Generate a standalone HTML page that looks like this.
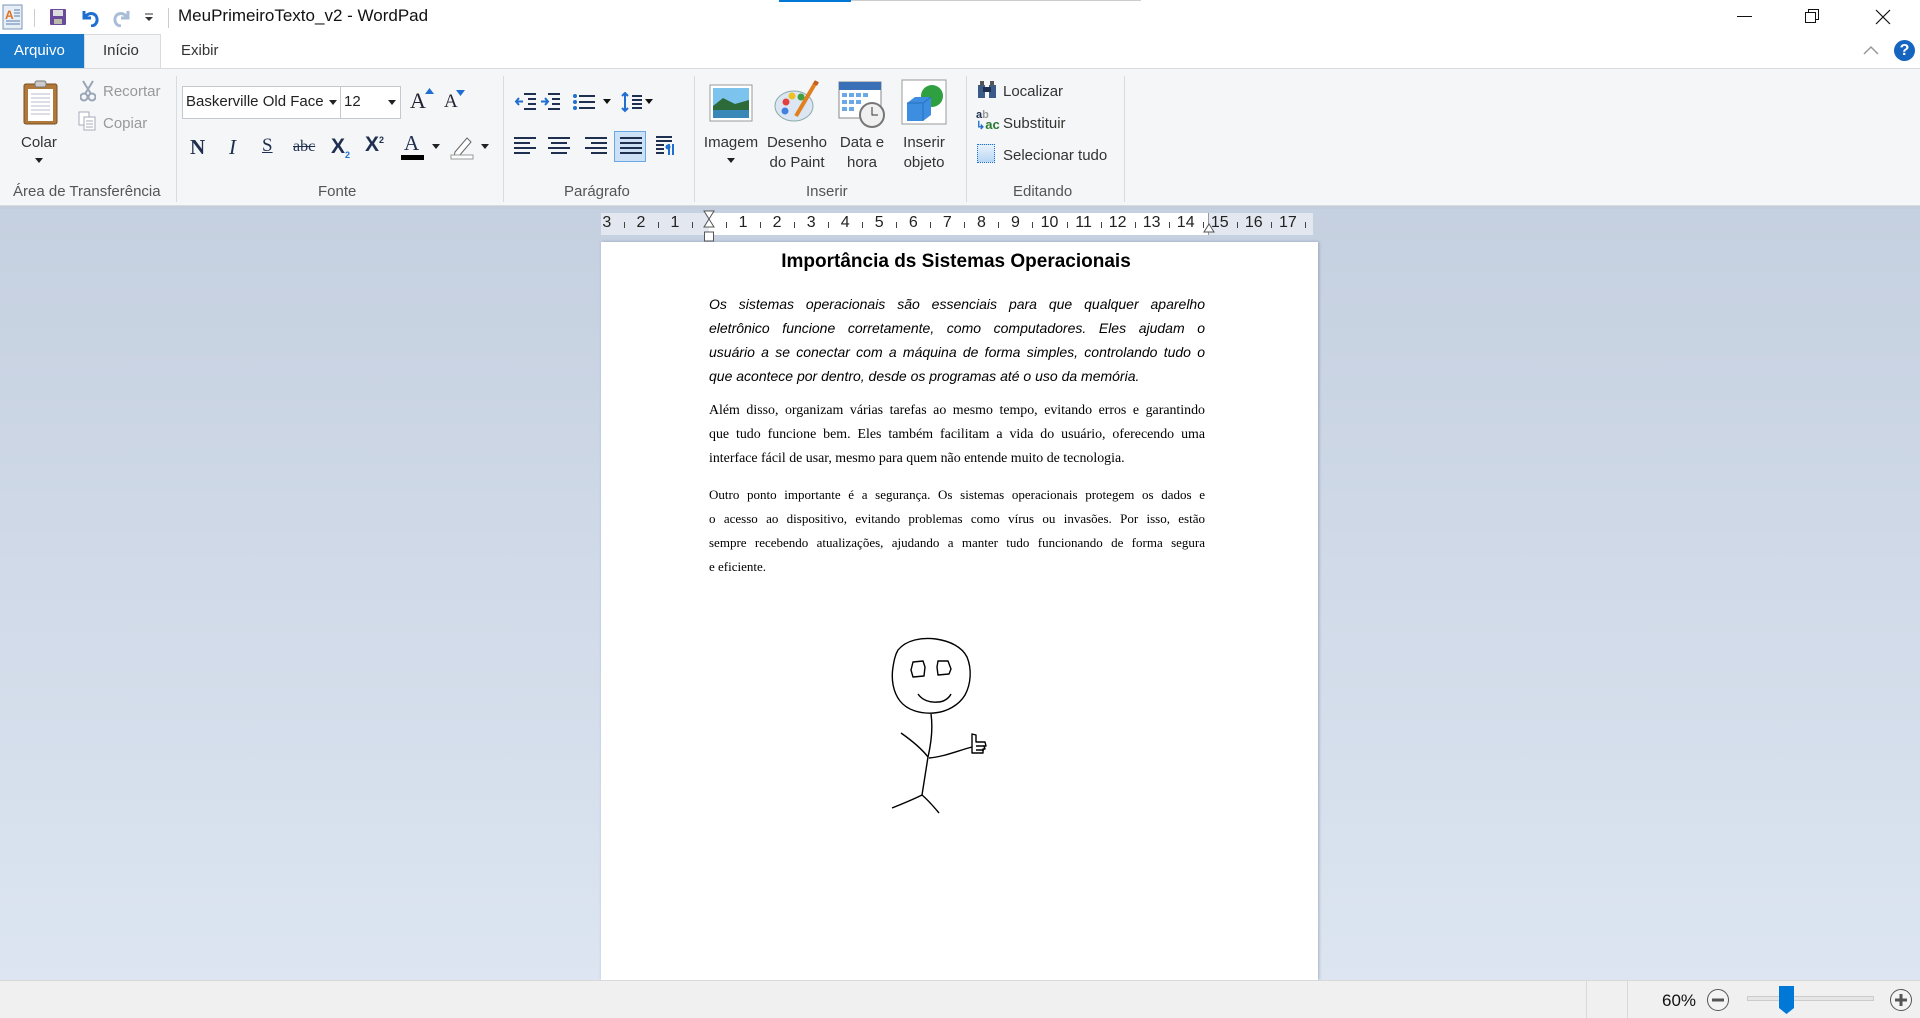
<!DOCTYPE html>
<html><head><meta charset="utf-8">
<style>
*{margin:0;padding:0;box-sizing:border-box}
body{width:1920px;height:1018px;overflow:hidden;font-family:"Liberation Sans",sans-serif;background:#fff;position:relative;color:#222}
.a{position:absolute;white-space:nowrap}
.rb{font-size:15px;color:#333}
.gl{font-size:15px;color:#555;top:183px}
.sep{position:absolute;top:76px;width:1px;height:126px;background:#dadbdc}
.ctr{transform:translateX(-50%);text-align:center}
.tick{position:absolute;top:222px;width:1px;height:6px;background:#444}
.num{position:absolute;top:214px;font-size:16px;color:#222;transform:translateX(-50%)}
.t{position:absolute;left:709px;width:496px;color:#000}
.t div{text-align:justify;text-align-last:justify;white-space:nowrap;height:24px}
.t div.l{text-align-last:left}
</style></head><body>
<!-- title bar -->
<svg class="a" style="left:2px;top:4px" width="22" height="26" viewBox="0 0 22 26"><rect x="1" y="1" width="19" height="24" fill="#e8eef6" stroke="#7a94b8"/><text x="3" y="15" font-size="12" font-family="Liberation Sans" fill="#e07020" font-weight="bold">A</text><path d="M12 6h6M12 9h6M12 12h6M4 17h14M4 20h14" stroke="#5a7fb0"/></svg>
<div class="a" style="left:34px;top:9px;width:1px;height:18px;background:#ccc"></div>
<svg class="a" style="left:50px;top:9px" width="16" height="16"><rect x="0" y="0" width="16" height="16" rx="1" fill="#6a4a9a"/><rect x="3" y="1" width="10" height="6" fill="#ddd"/><rect x="4" y="10" width="8" height="5" fill="#bba"/></svg>
<svg class="a" style="left:80px;top:7px" width="20" height="20"><path d="M4 4v7h7" fill="none" stroke="#1e6fd0" stroke-width="3"/><path d="M5 10c4-6 13-4 12 4c-1 4-4 5-6 5" fill="none" stroke="#1e6fd0" stroke-width="3"/></svg>
<svg class="a" style="left:112px;top:7px" width="20" height="20"><path d="M16 4v7h-7" fill="none" stroke="#a9bdd6" stroke-width="3"/><path d="M15 10c-4-6-13-4-12 4c1 4 4 5 6 5" fill="none" stroke="#a9bdd6" stroke-width="3"/></svg>
<svg class="a" style="left:144px;top:13px" width="10" height="10"><path d="M1 1h8" stroke="#333"/><path d="M1 4h8l-4 4z" fill="#333"/></svg>
<div class="a" style="left:168px;top:8px;width:1px;height:20px;background:#ccc"></div>
<div class="a" style="left:178px;top:6px;font-size:17px;color:#111">MeuPrimeiroTexto_v2 - WordPad</div>
<div class="a" style="left:779px;top:0;width:72px;height:2px;background:#0078d7"></div>
<div class="a" style="left:851px;top:0;width:290px;height:1px;background:#ccc"></div>
<div class="a" style="left:1737px;top:16px;width:15px;height:1px;background:#111"></div>
<svg class="a" style="left:1805px;top:9px" width="15" height="15"><rect x="0.5" y="3.5" width="10" height="10" fill="#fff" stroke="#111"/><path d="M3.5 3.5v-3h10v10h-3" fill="none" stroke="#111"/></svg>
<svg class="a" style="left:1875px;top:9px" width="16" height="16"><path d="M1 1l14 14M15 1L1 15" stroke="#111" stroke-width="1.2"/></svg>
<!-- tabs -->
<div class="a" style="left:0;top:34px;width:84px;height:34px;background:#1979ca;color:#fff;font-size:15px;padding:8px 0 0 14px">Arquivo</div>
<div class="a" style="left:84px;top:34px;width:77px;height:35px;background:#f5f6f7;border:1px solid #dadbdc;border-bottom:none;font-size:15px;padding:7px 0 0 18px;color:#333">Início</div>
<div class="a rb" style="left:181px;top:42px">Exibir</div>
<div class="a" style="left:0;top:68px;width:1920px;height:1px;background:#dadbdc"></div>
<svg class="a" style="left:1863px;top:45px" width="16" height="10"><path d="M1 9l7-7 7 7" fill="none" stroke="#999" stroke-width="1.5"/></svg>
<div class="a" style="left:1894px;top:40px;width:21px;height:21px;border-radius:50%;background:#1565c0;color:#fff;font-size:16px;font-weight:bold;text-align:center;line-height:21px">?</div>
<!-- ribbon -->
<div class="a" style="left:0;top:69px;width:1920px;height:137px;background:#f5f6f7;border-bottom:1px solid #dadbdc"></div>
<div class="a" style="left:0;top:206px;width:1920px;height:3px;background:#c4cddb"></div>
<!-- clipboard -->
<svg class="a" style="left:22px;top:80px" width="38" height="46"><rect x="2" y="4" width="33" height="40" rx="2" fill="#b0783a" stroke="#7a5020"/><rect x="6" y="9" width="25" height="32" fill="#fff"/><path d="M9 14h19M9 18h19M9 22h19M9 26h19M9 30h19M9 34h19" stroke="#bbc"/><rect x="13" y="1" width="11" height="6" rx="2" fill="#ccc" stroke="#777"/></svg>
<div class="a rb" style="left:21px;top:134px">Colar</div>
<svg class="a" style="left:35px;top:158px" width="8" height="5"><path d="M0 0h8l-4 5z" fill="#222"/></svg>
<svg class="a" style="left:80px;top:80px" width="16" height="22"><path d="M3 1l8 13M13 1l-8 13" stroke="#9aa6b8" stroke-width="2"/><circle cx="4" cy="17" r="3.5" fill="none" stroke="#9aa6b8" stroke-width="2"/><circle cx="12" cy="17" r="3.5" fill="none" stroke="#9aa6b8" stroke-width="2"/></svg>
<div class="a rb" style="left:103px;top:83px;color:#999">Recortar</div>
<svg class="a" style="left:78px;top:111px" width="18" height="20"><rect x="1" y="1" width="10" height="13" fill="#fff" stroke="#aab"/><rect x="6" y="6" width="11" height="13" fill="#fff" stroke="#aab"/><path d="M8 10h7M8 13h7M8 16h7" stroke="#aab"/></svg>
<div class="a rb" style="left:103px;top:115px;color:#999">Copiar</div>
<div class="a gl" style="left:13px">Área de Transferência</div>
<div class="sep" style="left:176px"></div>
<!-- font -->
<div class="a" style="left:182px;top:86px;width:159px;height:33px;background:#fff;border:1px solid #c5c9cf;font-size:15px;padding:6px 0 0 3px;color:#222">Baskerville Old Face</div>
<svg class="a" style="left:329px;top:100px" width="8" height="5"><path d="M0 0h8l-4 5z" fill="#222"/></svg>
<div class="a" style="left:340px;top:86px;width:61px;height:33px;background:#fff;border:1px solid #c5c9cf;font-size:15px;padding:6px 0 0 3px;color:#222">12</div>
<svg class="a" style="left:388px;top:100px" width="8" height="5"><path d="M0 0h8l-4 5z" fill="#222"/></svg>
<div class="a" style="left:410px;top:88px;font:22px 'Liberation Serif',serif;color:#223">A</div>
<svg class="a" style="left:425px;top:88px" width="9" height="6"><path d="M0 6l4.5-6 4.5 6z" fill="#1e6fd0"/></svg>
<div class="a" style="left:444px;top:91px;font:19px 'Liberation Serif',serif;color:#223">A</div>
<svg class="a" style="left:456px;top:90px" width="9" height="6"><path d="M0 0l4.5 6 4.5-6z" fill="#1e6fd0"/></svg>
<div class="a" style="left:190px;top:135px;font:bold 21px 'Liberation Serif',serif;color:#1f2f4f">N</div>
<div class="a" style="left:229px;top:135px;font:italic 21px 'Liberation Serif',serif;color:#1f2f4f">I</div>
<div class="a" style="left:262px;top:135px;font:19px 'Liberation Serif',serif;color:#1f2f4f;text-decoration:underline">S</div>
<div class="a" style="left:293px;top:138px;font:16px 'Liberation Serif',serif;color:#1f2f4f;text-decoration:line-through">abc</div>
<div class="a" style="left:331px;top:135px;font:bold 21px 'Liberation Sans',sans-serif;color:#1f2f4f">X<sub style="font-size:9px;color:#1e6fd0">2</sub></div>
<div class="a" style="left:365px;top:133px;font:bold 21px 'Liberation Sans',sans-serif;color:#1f2f4f">X<sup style="font-size:9px">2</sup></div>
<div class="a" style="left:404px;top:131px;font:21px 'Liberation Serif',serif;color:#1f2f4f">A</div>
<div class="a" style="left:401px;top:155px;width:23px;height:5px;background:#000"></div>
<svg class="a" style="left:432px;top:144px" width="8" height="5"><path d="M0 0h8l-4 5z" fill="#222"/></svg>
<svg class="a" style="left:449px;top:134px" width="26" height="26"><path d="M6 18l12-14 4 4-12 14-5 1z" fill="#fff" stroke="#666"/><rect x="2" y="21" width="22" height="4" fill="#fff" stroke="#999"/></svg>
<svg class="a" style="left:481px;top:144px" width="8" height="5"><path d="M0 0h8l-4 5z" fill="#222"/></svg>
<div class="a gl" style="left:318px">Fonte</div>
<div class="sep" style="left:503px"></div>
<!-- paragraph -->
<svg class="a" style="left:514px;top:92px" width="160" height="22" fill="none">
<g stroke="#1f2f4f" stroke-width="2"><path d="M10 2h12M14 7h8M14 12h8M10 17h12"/><path d="M34 2h12M38 7h8M38 12h8M34 17h12"/><path d="M65 4h16M65 10h16M65 16h16"/><path d="M118 4h10M118 8h10M118 12h10M118 16h10"/></g>
<path d="M9 9.5h-7M5 6l-3 3.5 3 3.5" stroke="#1e6fd0" stroke-width="2"/><path d="M27 9.5h7M31 6l3 3.5-3 3.5" stroke="#1e6fd0" stroke-width="2"/>
<circle cx="61" cy="4" r="2" fill="#1e6fd0"/><circle cx="61" cy="10" r="2" fill="#1e6fd0"/><circle cx="61" cy="16" r="2" fill="#1e6fd0"/>
<path d="M111 1v18M108 4l3-3 3 3M108 16l3 3 3-3" stroke="#1e6fd0" stroke-width="2"/>
<path d="M89 7h8l-4 5z M131 7h8l-4 5z" fill="#111"/></svg>
<div class="a" style="left:614px;top:131px;width:32px;height:31px;background:#cce1f6;border:1px solid #6aa8e4"></div>
<svg class="a" style="left:514px;top:136px" width="160" height="22" fill="none" stroke="#1f2f4f" stroke-width="2">
<path d="M0 2h22M0 7h16M0 12h22M0 17h16"/><path d="M34 2h22M37 7h16M34 12h22M37 17h16"/><path d="M71 2h22M77 7h16M71 12h22M77 17h16"/><path d="M106 2h22M106 7h22M106 12h22M106 17h22"/><path d="M142 1h16M142 5h16M142 9h8M142 13h8M142 17h8"/><path d="M155 8v11M159 8v11" stroke="#1e6fd0"/><circle cx="154" cy="11" r="2.5" fill="#1e6fd0" stroke="none"/></svg>
<div class="a gl" style="left:564px">Parágrafo</div>
<div class="sep" style="left:694px"></div>
<!-- insert -->
<svg class="a" style="left:709px;top:84px" width="44" height="38"><rect x="1" y="1" width="42" height="36" fill="#fff" stroke="#999"/><rect x="4" y="4" width="36" height="30" fill="#7cc4ee"/><path d="M4 22l10-8 12 6 14-4v18H4z" fill="#2d6a3a"/><rect x="4" y="26" width="36" height="8" fill="#3a88b8"/></svg>
<div class="a rb ctr" style="left:731px;top:134px">Imagem</div>
<svg class="a" style="left:727px;top:158px" width="8" height="5"><path d="M0 0h8l-4 5z" fill="#222"/></svg>
<svg class="a" style="left:774px;top:80px" width="46" height="46"><ellipse cx="20" cy="26" rx="19" ry="15" fill="#dce6f2" stroke="#8aa"/><circle cx="12" cy="22" r="3.5" fill="#e04040"/><circle cx="18" cy="16" r="3.5" fill="#f0c020"/><circle cx="27" cy="17" r="3.5" fill="#40a040"/><circle cx="11" cy="31" r="3.5" fill="#4080e0"/><path d="M42 2L22 36" stroke="#e08020" stroke-width="4"/><path d="M40 2l4 2" stroke="#c06020" stroke-width="4"/></svg>
<div class="a rb ctr" style="left:797px;top:134px">Desenho</div>
<div class="a rb ctr" style="left:797px;top:154px">do Paint</div>
<svg class="a" style="left:838px;top:80px" width="48" height="48"><rect x="1" y="2" width="42" height="36" fill="#fff" stroke="#888"/><rect x="1" y="2" width="42" height="8" fill="#3a70b8"/><g fill="#6aa8e8"><rect x="4" y="13" width="5" height="4"/><rect x="11" y="13" width="5" height="4"/><rect x="18" y="13" width="5" height="4"/><rect x="25" y="13" width="5" height="4"/><rect x="4" y="20" width="5" height="4"/><rect x="11" y="20" width="5" height="4"/><rect x="18" y="20" width="5" height="4"/><rect x="4" y="27" width="5" height="4"/><rect x="11" y="27" width="5" height="4"/></g><circle cx="34" cy="35" r="12" fill="#f0f0f0" stroke="#777" stroke-width="2"/><path d="M34 27v8h6" stroke="#333" fill="none"/></svg>
<div class="a rb ctr" style="left:862px;top:134px">Data e</div>
<div class="a rb ctr" style="left:862px;top:154px">hora</div>
<svg class="a" style="left:901px;top:79px" width="46" height="46"><rect x="1" y="1" width="44" height="44" fill="#fff" stroke="#999"/><circle cx="31" cy="17" r="11" fill="#2ea040"/><path d="M6 24l8-6h16v18l-8 6H6z" fill="#3d8de0"/><path d="M6 24h16v18M22 24l8-6" stroke="#2a70c0" fill="none"/></svg>
<div class="a rb ctr" style="left:924px;top:134px">Inserir</div>
<div class="a rb ctr" style="left:924px;top:154px">objeto</div>
<div class="a gl" style="left:806px">Inserir</div>
<div class="sep" style="left:966px"></div>
<!-- edit -->
<svg class="a" style="left:977px;top:81px" width="20" height="18"><rect x="1" y="4" width="7" height="13" fill="#3a5a8a"/><rect x="12" y="4" width="7" height="13" fill="#3a5a8a"/><rect x="6" y="6" width="8" height="5" fill="#1f2f4f"/><rect x="3" y="0" width="4" height="5" fill="#555"/><rect x="13" y="0" width="4" height="5" fill="#555"/></svg>
<div class="a rb" style="left:1003px;top:83px">Localizar</div>
<div class="a" style="left:976px;top:110px;font:bold 11px 'Liberation Sans';color:#1f2f4f;line-height:10px">a<span style="color:#999">b</span><br><span style="color:#1e6fd0">↳</span><span style="color:#2a7a30;font-size:13px">ac</span></div>
<div class="a rb" style="left:1003px;top:115px">Substituir</div>
<div class="a" style="left:977px;top:144px;width:18px;height:19px;border:1px dotted #1e6fd0;background:linear-gradient(#e8f2fc,#b8d6f4)"></div>
<div class="a rb" style="left:1003px;top:147px">Selecionar tudo</div>
<div class="a gl" style="left:1013px">Editando</div>
<div class="sep" style="left:1124px"></div>
<!-- workspace -->
<div class="a" style="left:0;top:209px;width:1920px;height:771px;background:linear-gradient(#c5d0e0,#dce5f1)"></div>
<!-- ruler -->
<div class="a" style="left:601px;top:213px;width:712px;height:22px;background:#e3e8f0"></div>
<div class="a" style="left:709px;top:213px;width:499px;height:22px;background:#fff"></div>
<div class="a" style="left:1208px;top:213px;width:1px;height:22px;background:#999"></div>
<div id="rl"></div>
<svg class="a" style="left:703px;top:210px" width="12" height="32"><path d="M1 1h10l-5 8zM6 9l5 8H1z" fill="#fff" stroke="#555"/><rect x="1.5" y="22" width="9" height="9" fill="#fff" stroke="#555"/></svg>
<svg class="a" style="left:1203px;top:222px" width="12" height="12"><path d="M6 2l5 8H1z" fill="#fff" stroke="#555"/></svg>
<!-- page -->
<div class="a" style="left:601px;top:242px;width:717px;height:738px;background:#fff;box-shadow:1px 0 3px rgba(80,100,130,.4)"></div>
<div class="a ctr" style="left:956px;top:251px;font:bold 19px 'Liberation Sans',sans-serif;color:#000">Importância ds Sistemas Operacionais</div>
<div class="t" style="top:292px;font:italic 14px/24px 'Liberation Sans',sans-serif">
<div>Os sistemas operacionais são essenciais para que qualquer aparelho</div>
<div>eletrônico funcione corretamente, como computadores. Eles ajudam o</div>
<div>usuário a se conectar com a máquina de forma simples, controlando tudo o</div>
<div class="l">que acontece por dentro, desde os programas até o uso da memória.</div>
</div>
<div class="t" style="top:399px;font:13.9px/24px 'Liberation Serif',serif">
<div>Além disso, organizam várias tarefas ao mesmo tempo, evitando erros e garantindo</div>
<div>que tudo funcione bem. Eles também facilitam a vida do usuário, oferecendo uma</div>
<div class="l">interface fácil de usar, mesmo para quem não entende muito de tecnologia.</div>
</div>
<div class="t" style="top:483px;font:13px/24px 'Liberation Serif',serif">
<div>Outro ponto importante é a segurança. Os sistemas operacionais protegem os dados e</div>
<div>o acesso ao dispositivo, evitando problemas como vírus ou invasões. Por isso, estão</div>
<div>sempre recebendo atualizações, ajudando a manter tudo funcionando de forma segura</div>
<div class="l">e eficiente.</div>
</div>
<svg class="a" style="left:0;top:0" width="1920" height="1018" fill="none" stroke="#000" stroke-width="1.4" stroke-linejoin="round">
<path d="M898 650c8-10 24-13 38-11c14 2 26 8 31 18c5 12 4 27-2 38c-6 10-18 17-31 18c-14 1-27-3-34-12c-7-9-9-22-7-34c1-6 2-12 5-17z"/>
<path d="M913 662l10-1 2 6-1 9-11 1-2-7z"/><path d="M938 661l10 0 3 8-2 5-11 1-1-8z"/>
<path d="M918 694c4 6 12 9 20 8c6 0 11-4 13-8"/>
<path d="M931 714c2 14 0 30-3 43c-2 13-4 26-6 38"/>
<path d="M901 733c10 7 20 15 27 24"/>
<path d="M929 758c14-1 28-7 43-11"/>
<path d="M972 747l0-13 4 1 0 7h9l1 4h-2l1 3h-2l0 4-11 0z"/><path d="M976 746h8M976 750h8"/>
<path d="M922 795c-10 5-20 9-30 13"/><path d="M922 795c6 5 12 12 17 18"/>
</svg>
<!-- status bar -->
<div class="a" style="left:0;top:980px;width:1920px;height:38px;background:#f0f0f0;border-top:1px solid #d9d9d9"></div>
<div class="a" style="left:1586px;top:981px;width:1px;height:37px;background:#d9d9d9"></div>
<div class="a" style="left:1627px;top:981px;width:1px;height:37px;background:#d9d9d9"></div>
<div class="a" style="left:1662px;top:991px;font-size:17px;color:#111">60%</div>
<svg class="a" style="left:1706px;top:988px" width="24" height="24"><circle cx="12" cy="12" r="10.5" fill="#f4f4f4" stroke="#555"/><rect x="6" y="10.5" width="12" height="3" fill="#555"/></svg>
<div class="a" style="left:1747px;top:996px;width:127px;height:5px;background:#e6e6e6;border:1px solid #ccc"></div>
<svg class="a" style="left:1779px;top:986px" width="15" height="28"><path d="M0 0h15v22l-7.5 6L0 22z" fill="#0078d7"/></svg>
<svg class="a" style="left:1889px;top:988px" width="24" height="24"><circle cx="12" cy="12" r="10.5" fill="#f4f4f4" stroke="#555"/><path d="M6 12h12M12 6v12" stroke="#555" stroke-width="3"/></svg>
<script>
var h='';for(var k=-4;k<=17;k++){var x=709+k*34.05;if(k!=0&&k>-4&&x>603)h+='<div class="num" style="left:'+x+'px">'+Math.abs(k)+'</div>';var m=x+17;if(m>603&&m<1310)h+='<div class="tick" style="left:'+m+'px"></div>';}
document.getElementById('rl').innerHTML=h;
</script>
</body></html>
